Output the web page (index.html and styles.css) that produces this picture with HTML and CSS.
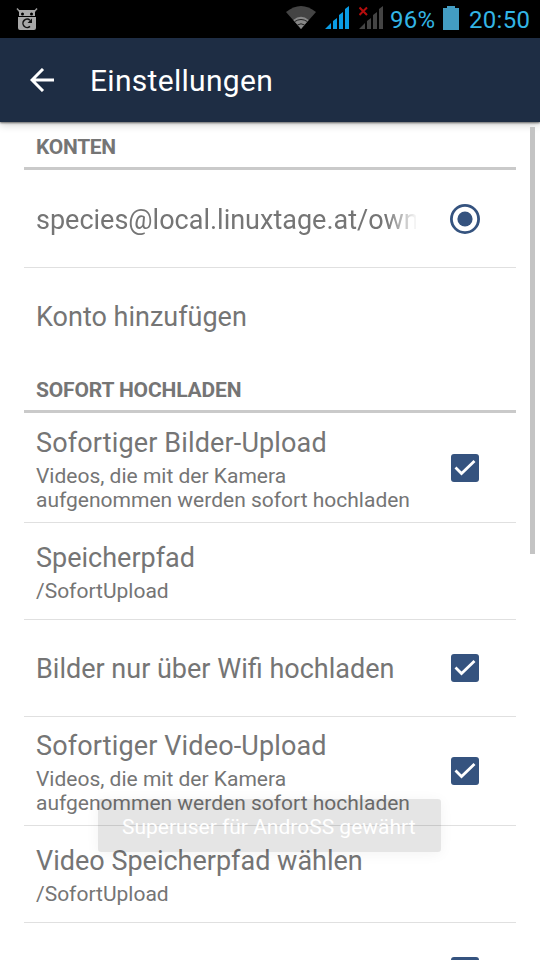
FILE: index.html
```
<!DOCTYPE html>
<html lang="de">
<head>
<meta charset="utf-8">
<title>Einstellungen</title>
<link rel="stylesheet" href="styles.css">
</head>
<body>
<header class="status">
  <svg class="robot" width="22" height="23" viewBox="0 0 22 23">
    <path d="M1 .5l3 3.5M21 .5l-3 3.5" stroke="#999" stroke-width="1.5"/>
    <path d="M3 2H19V8H3zM2 9H20V20Q20 22 18 22H4Q2 22 2 20z" fill="#a8a8a8"/>
    <circle cx="6.5" cy="6" r="1.5"/><circle cx="15.5" cy="6" r="1.5"/>
    <path d="M14 12.2A4.2 4.2 0 1 0 14 18.4" fill="none" stroke="#111" stroke-width="1.5"/>
    <path d="M16 10.5v4.5h-4.5z" fill="#111"/>
  </svg>
  <div class="indicators">
    <svg class="wifi" width="30" height="24" viewBox="0 0 30 24">
      <path d="M0 7Q15-5 30 7L15 24z" fill="#444"/>
      <path d="M7.3 15Q15 8.6 22.7 15L15 24z" fill="#888"/>
      <path d="M8.6 16.6Q15 12.4 21.4 16.6M11.4 20Q15 17.6 18.6 20" fill="none" stroke="#222" stroke-width="1"/>
    </svg>
    <svg class="signal" width="24" height="24" viewBox="0 0 24 24" fill="#0a9be3">
      <path d="M0 24L6 18V24zM8 16l4-3V24H8zM14 10l4-3V24H14zM20 4l4-3V24H20z"/>
    </svg>
    <svg class="signal off" width="24" height="24" viewBox="0 0 24 24" fill="#444">
      <path d="M0 24L6 18V24zM8 16l4-3V24H8zM14 10l4-3V24H14zM20 4l4-3V24H20z"/>
      <path d="M.5 2.500l7.500 7.500M8 2.500L.5 10" stroke="#b50d0d" stroke-width="2"/>
    </svg>
    <span class="percent">96%</span>
    <svg class="battery" width="16" height="24" viewBox="0 0 16 24"><path d="M4 0h8v2h4v22H0V2h4z" fill="#439dc3"/></svg>
    <span class="clock">20:50</span>
  </div>
</header>
<nav class="appbar">
  <svg width="24" height="24" viewBox="0 0 24 24" fill="none" stroke="#fff" stroke-width="3"><path d="M24 12H2M13 1L2 12l11 11"/></svg>
  <h1>Einstellungen</h1>
</nav>
<main class="list">
  <h2 class="first">KONTEN</h2>
  <section class="row first-row">
    <div class="text"><p class="title account">species@local.linuxtage.at/own</p></div>
    <svg class="radio" width="30" height="30" viewBox="0 0 30 30"><circle cx="15" cy="15" r="13.6" fill="none" stroke="#35537f" stroke-width="2.8"/><circle cx="15" cy="15" r="7.6" fill="#35537f"/></svg>
  </section>
  <section class="row last"><div class="text"><p class="title">Konto hinzufügen</p></div></section>
  <h2>SOFORT HOCHLADEN</h2>
  <section class="row tall taller">
    <div class="text"><p class="title upload">Sofortiger Bilder-Upload</p><p class="summary">Videos, die mit der Kamera<br>aufgenommen werden sofort hochladen</p></div>
    <svg class="check" width="28" height="28" viewBox="0 0 28 28"><rect width="28" height="28" rx="3" fill="#35537f"/><path d="M4.500 13.500l6 6L23.500 7" fill="none" stroke="#fff" stroke-width="2.8"/></svg>
  </section>
  <section class="row"><div class="text"><p class="title">Speicherpfad</p><p class="summary">/SofortUpload</p></div></section>
  <section class="row">
    <div class="text"><p class="title">Bilder nur über Wifi hochladen</p></div>
    <svg class="check" width="28" height="28" viewBox="0 0 28 28"><rect width="28" height="28" rx="3" fill="#35537f"/><path d="M4.500 13.500l6 6L23.500 7" fill="none" stroke="#fff" stroke-width="2.8"/></svg>
  </section>
  <section class="row tall">
    <div class="text"><p class="title upload">Sofortiger Video-Upload</p><p class="summary">Videos, die mit der Kamera<br>aufgenommen werden sofort hochladen</p></div>
    <svg class="check" width="28" height="28" viewBox="0 0 28 28"><rect width="28" height="28" rx="3" fill="#35537f"/><path d="M4.500 13.500l6 6L23.500 7" fill="none" stroke="#fff" stroke-width="2.8"/></svg>
  </section>
  <section class="row"><div class="text"><p class="title">Video Speicherpfad wählen</p><p class="summary">/SofortUpload</p></div></section>
  <section class="row clipped">
    <svg class="check" width="28" height="28" viewBox="0 0 28 28"><rect width="28" height="28" rx="3" fill="#35537f"/></svg>
  </section>
</main>
<div class="scrollbar"></div>
<div class="toast"><span>Superuser für AndroSS gewährt</span></div>
</body>
</html>
```

FILE: styles.css
```
* { box-sizing: border-box; margin: 0; padding: 0; }
body {
  position: relative;
  width: 540px;
  height: 960px;
  overflow: hidden;
  background: #fff;
  color: #757575;
  font-family: Roboto, "Liberation Sans", sans-serif;
  white-space: nowrap;
}
svg { display: block; flex: none; }
.status {
  height: 38px;
  background: #000;
  display: flex;
  justify-content: space-between;
  padding: 0 9px 0 16px;
}
.robot { margin-top: 8px; }
.indicators { display: flex; color: #33b5e5; font-size: 24px; line-height: 40px; }
.wifi { margin: 5px 9px 0 0; }
.signal { margin: 5px 10px 0 0; }
.signal.off { margin-right: 7px; }
.percent { width: 46px; margin-right: 7px; letter-spacing: .2px; }
.battery { margin: 6px 10px 0 0; }
.clock { width: 62px; letter-spacing: .3px; }
.appbar {
  position: relative;
  height: 84px;
  background: #1e2d44;
  box-shadow: 0 1px 2px rgba(0,0,0,.55), 0 3px 8px rgba(0,0,0,.18);
  display: flex;
  align-items: center;
  gap: 36px;
  padding-left: 30px;
}
h1 { color: #fff; font-size: 30px; font-weight: 400; line-height: 36px; letter-spacing: .3px; padding-top: 2px; }
.list { padding: 0 24px; height: 838px; overflow: hidden; }
h2 {
  height: 49px;
  border-bottom: 3px solid #cacaca;
  padding: 14px 12px 0;
  font-size: 21px;
  line-height: 24px;
  font-weight: 700;
  letter-spacing: -.15px;
}
h2.first { height: 48px; padding-top: 13px; letter-spacing: -.3px; }
.row {
  height: 97px;
  border-bottom: 1px solid #e0e0e0;
  display: flex;
  align-items: center;
  justify-content: space-between;
  padding: 0 36px 0 12px;
}
.row.tall { height: 109px; }
.row.taller { height: 110px; }
.row.first-row { height: 98px; }
.row.last { height: 96px; border: 0; }
.text { width: 380px; }
.title { font-size: 27px; line-height: 36px; }
.title:only-child { padding-top: 2px; }
.upload { letter-spacing: .14px; }
.account {
  -webkit-mask-image: linear-gradient(90deg, #000 350px, transparent 382px);
  mask-image: linear-gradient(90deg, #000 350px, transparent 382px);
}
.summary { font-size: 21px; line-height: 24px; padding-top: 3px; }
.row.tall .summary { margin-bottom: -1px; }
.check { margin-right: 1px; }
.row.clipped { height: 37px; border: 0; align-items: flex-start; justify-content: flex-end; padding-top: 34px; }
.scrollbar { position: absolute; left: 530px; top: 127px; width: 5px; height: 427px; background: #c4c4c4; }
.toast {
  position: absolute;
  left: 98px;
  top: 799px;
  width: 343px;
  height: 53px;
  padding-left: 24px;
  border-radius: 3px;
  background: rgba(0,0,0,.1);
  box-shadow: 0 2px 14px rgba(0,0,0,.05);
  color: #fff;
  font-size: 21px;
  line-height: 56px;
}
```
